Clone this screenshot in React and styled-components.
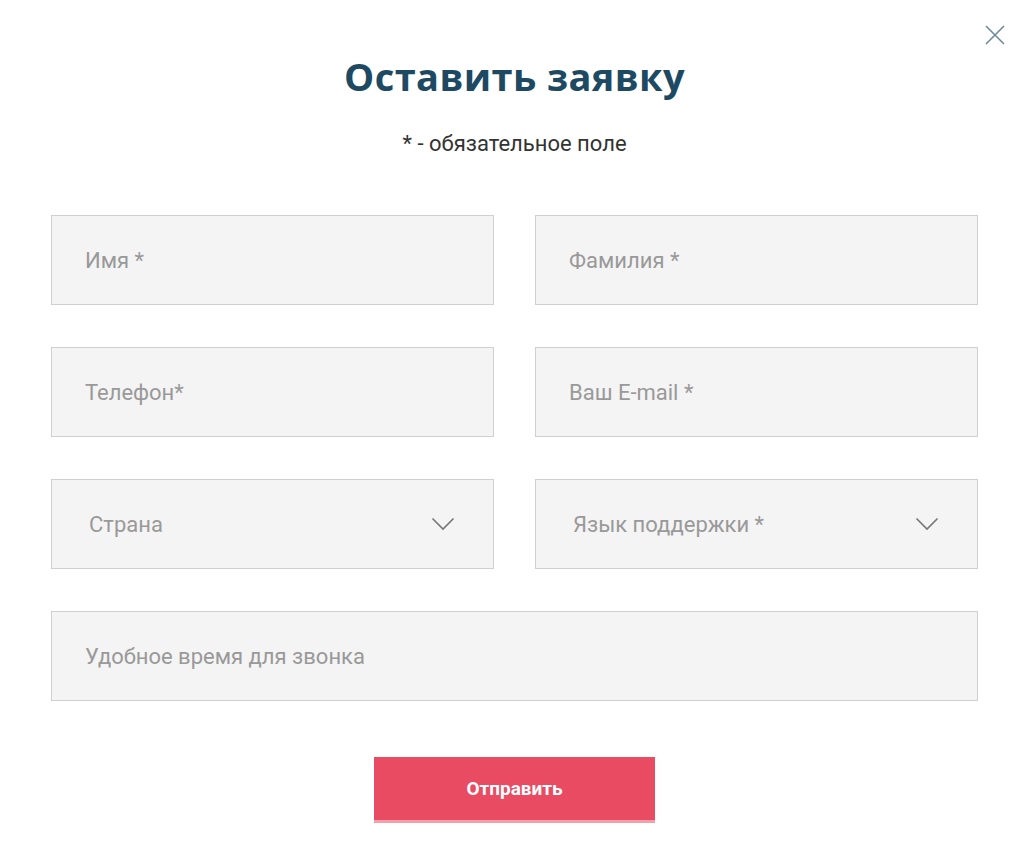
import React from "react";
import styled, { createGlobalStyle } from "styled-components";

const GlobalStyle = createGlobalStyle`
  body {
    margin: 0;
    background: #fff;
    font-family: Roboto, "Noto Sans", sans-serif;
  }
`;

const Modal = styled.div`
  position: relative;
  width: 1033px;
  min-height: 843px;
  box-sizing: border-box;
  padding: 50px 55px 0 51px;
`;

const Close = styled.button`
  position: absolute;
  top: 24px;
  right: 26px;
  width: 24px;
  height: 24px;
  padding: 0;
  border: none;
  background: transparent;
  cursor: pointer;
`;

const Title = styled.h2`
  margin: 0;
  text-align: center;
  font-family: "Open Sans", "DejaVu Sans", sans-serif;
  font-weight: 700;
  font-size: 38px;
  line-height: 52px;
  color: #1d4a62;
  letter-spacing: 0.4px;
`;

const Note = styled.p`
  margin: 29px 0 0;
  text-align: center;
  font-size: 22px;
  line-height: 26px;
  color: #333;
`;

const Form = styled.form`
  margin-top: 58px;
  display: grid;
  grid-template-columns: 443px 443px;
  column-gap: 41px;
  row-gap: 42px;
`;

const Field = styled.div`
  position: relative;
  grid-column: ${(p) => (p.wide ? "1 / -1" : "auto")};
  height: 90px;
  box-sizing: border-box;
  border: 1px solid #cfcfcf;
  background: #f4f4f4;
  display: flex;
  align-items: center;
  padding: 0 ${(p) => (p.select ? "38px" : "33px")} 0 ${(p) => (p.select ? "37px" : "33px")};
`;

const Input = styled.input`
  flex: 1;
  min-width: 0;
  padding: 0;
  border: none;
  background: transparent;
  outline: none;
  font-family: Roboto, sans-serif;
  font-size: 22px;
  color: #333;
  &::placeholder {
    color: #999;
  }
`;

const SelectText = styled.span`
  flex: 1;
  font-size: 22px;
  color: #999;
`;

const Actions = styled.div`
  display: flex;
  justify-content: center;
  margin-top: 56px;
`;

const Submit = styled.button`
  width: 281px;
  height: 63px;
  border: none;
  background: #e94b63;
  box-shadow: 0 3px 0 #f3a0ad;
  color: #fff;
  font-family: Roboto, sans-serif;
  font-weight: 700;
  font-size: 19px;
  cursor: pointer;
`;

const Chevron = () => (
  <svg width="24" height="14" viewBox="0 0 24 14" fill="none">
    <path d="M1.5 1.5 L12 12 L22.5 1.5" stroke="#777" strokeWidth="1.6" />
  </svg>
);

export default function App() {
  return (
    <>
      <GlobalStyle />
      <Modal>
        <Close aria-label="Закрыть">
          <svg width="22" height="22" viewBox="0 0 22 22">
            <path d="M2 2 L20 20 M20 2 L2 20" stroke="#6e8a98" strokeWidth="1.6" />
          </svg>
        </Close>
        <Title>Оставить заявку</Title>
        <Note>* - обязательное поле</Note>
        <Form onSubmit={(e) => e.preventDefault()}>
          <Field>
            <Input placeholder="Имя *" />
          </Field>
          <Field>
            <Input placeholder="Фамилия *" />
          </Field>
          <Field>
            <Input placeholder="Телефон*" />
          </Field>
          <Field>
            <Input placeholder="Ваш E-mail *" />
          </Field>
          <Field select>
            <SelectText>Страна</SelectText>
            <Chevron />
          </Field>
          <Field select>
            <SelectText>Язык поддержки *</SelectText>
            <Chevron />
          </Field>
          <Field wide>
            <Input placeholder="Удобное время для звонка" />
          </Field>
        </Form>
        <Actions>
          <Submit type="button">Отправить</Submit>
        </Actions>
      </Modal>
    </>
  );
}
